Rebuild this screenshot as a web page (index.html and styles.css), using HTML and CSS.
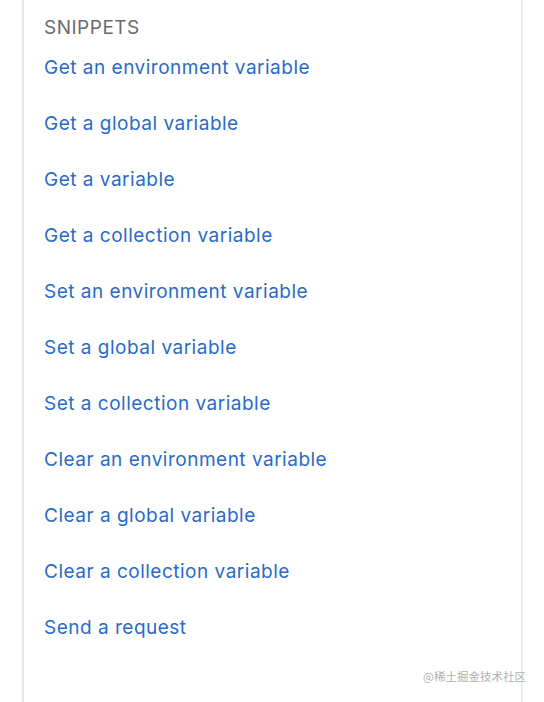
FILE: index.html
```html
<!DOCTYPE html>
<html>
<head>
<meta charset="utf-8">
<link rel="stylesheet" href="styles.css">
</head>
<body>
<div class="panel">
  <div class="heading">SNIPPETS</div>
  <ul class="snippets">
    <li><a>Get an environment variable</a></li>
    <li><a>Get a global variable</a></li>
    <li><a>Get a variable</a></li>
    <li><a>Get a collection variable</a></li>
    <li><a>Set an environment variable</a></li>
    <li><a>Set a global variable</a></li>
    <li><a>Set a collection variable</a></li>
    <li><a>Clear an environment variable</a></li>
    <li><a>Clear a global variable</a></li>
    <li><a>Clear a collection variable</a></li>
    <li><a>Send a request</a></li>
  </ul>
  <div class="watermark">@稀土掘金技术社区</div>
</div>
</body>
</html>
```

FILE: styles.css
```css
html, body {
  margin: 0;
  padding: 0;
  background: #ffffff;
  height: 100%;
}
body {
  font-family: Inter, "Noto Sans", sans-serif;
}
.panel {
  margin-left: 22px;
  width: 501px;
  height: 702px;
  box-sizing: border-box;
  border-left: 2px solid #e8e8e8;
  border-right: 2px solid #ececec;
  padding-left: 20px;
  position: relative;
}
.heading {
  padding-top: 15px;
  font-size: 19px;
  line-height: 26px;
  color: #6b6b6b;
  letter-spacing: 0.5px;
}
.snippets {
  list-style: none;
  margin: 13px 0 0 0;
  padding: 0;
}
.snippets li {
  height: 56px;
  font-size: 19px;
  line-height: 28px;
  letter-spacing: 0.5px;
}
.snippets a {
  color: #2a6bc4;
  text-decoration: none;
}
.watermark {
  position: absolute;
  right: -5px;
  top: 668px;
  font-family: "Noto Sans CJK SC", sans-serif;
  font-size: 11.5px;
  color: #b0b0b0;
}
```
